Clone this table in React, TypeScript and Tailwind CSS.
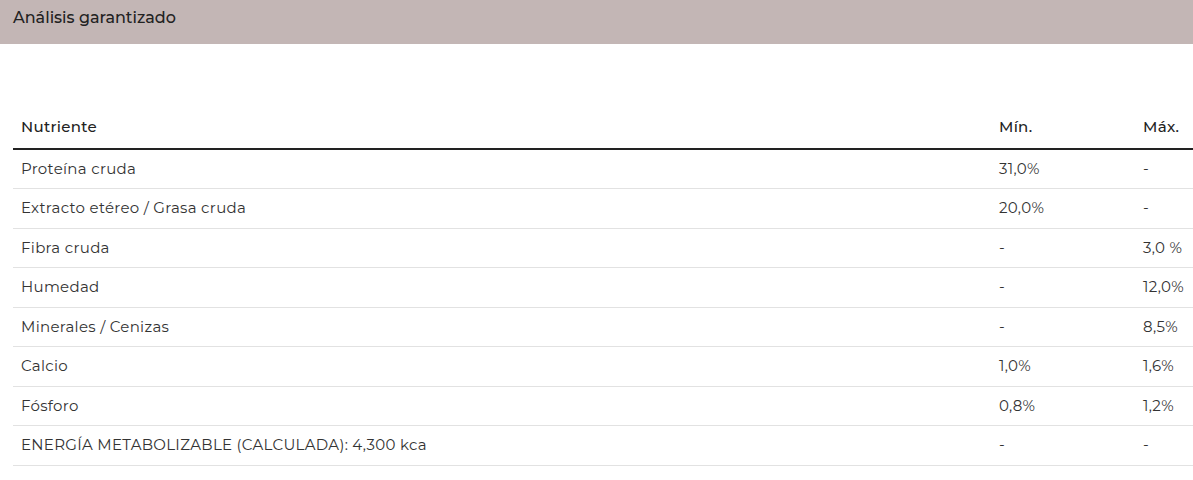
import React from "react";

const rows: [string, string, string][] = [
  ["Proteína cruda", "31,0%", "-"],
  ["Extracto etéreo / Grasa cruda", "20,0%", "-"],
  ["Fibra cruda", "-", "3,0 %"],
  ["Humedad", "-", "12,0%"],
  ["Minerales / Cenizas", "-", "8,5%"],
  ["Calcio", "1,0%", "1,6%"],
  ["Fósforo", "0,8%", "1,2%"],
  ["ENERGÍA METABOLIZABLE (CALCULADA): 4,300 kca", "-", "-"],
];

export default function App() {
  return (
    <div className="w-[1193px] h-[480px] bg-white overflow-hidden font-['Montserrat','Lato','Noto_Sans',sans-serif] text-[#333]">
      <div className="h-[44px] bg-[#c3b6b5] px-[13px] pt-[6px] text-[16px] font-medium text-[#222]">
        Análisis garantizado
      </div>
      <div className="pl-[13px] pt-[63px]">
        <table className="w-[1180px] border-collapse text-[15px] tracking-[0.3px]">
          <thead>
            <tr className="h-[42px] border-b-2 border-[#222]">
              <th className="pl-2 text-left font-medium text-[#222] w-[978px]">Nutriente</th>
              <th className="pl-2 text-left font-medium text-[#222] w-[144px]">Mín.</th>
              <th className="pl-2 text-left font-medium text-[#222]">Máx.</th>
            </tr>
          </thead>
          <tbody>
            {rows.map(([n, min, max]) => (
              <tr key={n} className="h-[39.5px] border-b border-[#e2e2e2]">
                <td className="pl-2">{n}</td>
                <td className="pl-2">{min}</td>
                <td className="pl-2">{max}</td>
              </tr>
            ))}
          </tbody>
        </table>
      </div>
    </div>
  );
}
